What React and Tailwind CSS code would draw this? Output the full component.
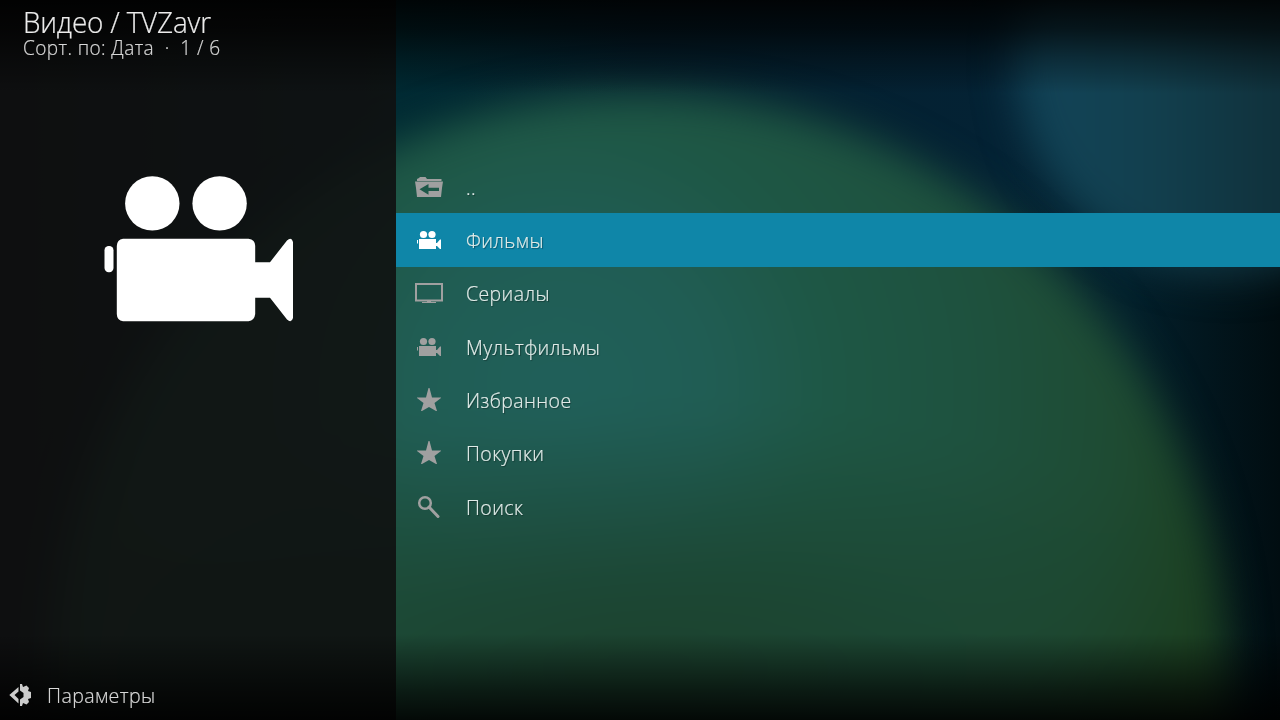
import React from "react";

function Backdrop() {
  return (
    <svg viewBox="0 0 1280 720" className="absolute inset-0 h-full w-full" preserveAspectRatio="none" aria-hidden="true">
      <defs>
        <linearGradient id="base" x1="0" y1="0" x2="1" y2="0">
          <stop offset="0" stopColor="#04060c" />
          <stop offset="0.31" stopColor="#002a33" />
          <stop offset="0.5" stopColor="#04202f" />
          <stop offset="0.78" stopColor="#042234" />
          <stop offset="0.88" stopColor="#03202c" />
          <stop offset="1" stopColor="#010d11" />
        </linearGradient>
        <radialGradient id="green" gradientUnits="userSpaceOnUse" cx="560" cy="390" r="680">
          <stop offset="0" stopColor="#20605a" />
          <stop offset="0.22" stopColor="#205d54" />
          <stop offset="0.4" stopColor="#1e5745" />
          <stop offset="0.6" stopColor="#1e523f" />
          <stop offset="0.82" stopColor="#1e4b33" />
          <stop offset="1" stopColor="#1c4020" />
        </radialGradient>
        <radialGradient id="low" gradientUnits="userSpaceOnUse" cx="0" cy="0" r="1" gradientTransform="translate(640 660) scale(620 250)">
          <stop offset="0" stopColor="#1b402c" stopOpacity="0.9" />
          <stop offset="0.35" stopColor="#1b402c" stopOpacity="0.7" />
          <stop offset="1" stopColor="#1b402c" stopOpacity="0" />
        </radialGradient>
        <linearGradient id="blue" x1="0" y1="0" x2="1" y2="0">
          <stop offset="0" stopColor="#124459" />
          <stop offset="0.3" stopColor="#12404f" />
          <stop offset="0.65" stopColor="#10303a" />
          <stop offset="1" stopColor="#10303a" />
        </linearGradient>
        <linearGradient id="shade" x1="0" y1="0" x2="0" y2="1">
          <stop offset="0" stopColor="#000" stopOpacity="0.88" />
          <stop offset="0.04" stopColor="#000" stopOpacity="0.68" />
          <stop offset="0.08" stopColor="#000" stopOpacity="0.35" />
          <stop offset="0.13" stopColor="#000" stopOpacity="0" />
          <stop offset="0.88" stopColor="#000" stopOpacity="0" />
          <stop offset="0.96" stopColor="#000" stopOpacity="0.62" />
          <stop offset="1" stopColor="#000" stopOpacity="0.88" />
        </linearGradient>
        <filter id="soft" x="-20%" y="-20%" width="140%" height="140%" colorInterpolationFilters="sRGB">
          <feGaussianBlur stdDeviation="21" />
        </filter>
      </defs>
      <rect width="1280" height="720" fill="url(#base)" />
      <circle cx="1230" cy="60" r="215" fill="url(#blue)" filter="url(#soft)" />
      <g filter="url(#soft)">
        <circle cx="640" cy="680" r="588" fill="url(#green)" />
        <circle cx="640" cy="680" r="588" fill="url(#low)" />
      </g>
      <rect width="396" height="720" fill="#101111" fillOpacity="0.9" />
      <rect width="1280" height="720" fill="url(#shade)" />
    </svg>
  );
}

function BigCamera() {
  return (
    <svg viewBox="0 0 190 146" className="h-[146px] w-[190px]" fill="#fff" aria-hidden="true">
      <circle cx="48.3" cy="27.4" r="27.2" />
      <circle cx="115.6" cy="27.4" r="27.2" />
      <rect x="0.5" y="70" width="9" height="26.3" rx="4.2" />
      <path d="M19 62.7H144.500Q151.200 63.500 151.200 70V86.200H166L183 64.500Q187.500 60.500 189 66V142Q187.500 147.500 183 143.500L166 121.700H151.200V138Q150.500 144.500 144.500 145.200H19Q13 144.500 12.800 138V70Q13 63.500 19 62.700Z" />
    </svg>
  );
}

function Camera() {
  return (
    <svg viewBox="0 0 28 28" className="h-7 w-7" fill="currentColor" aria-hidden="true">
      <circle cx="8.500" cy="7.500" r="3.600" />
      <circle cx="17" cy="7.500" r="3.600" />
      <path d="M4 12H21V16H22L25 12.500H26V22H25L22 19H21V22H4ZM2 13H3V16.500H2Z" />
    </svg>
  );
}

function FolderBack() {
  return (
    <svg viewBox="0 0 28 28" className="h-7 w-7" fill="currentColor" aria-hidden="true">
      <path d="M2 5L4 4L5 3H10.500L12 5H26.500V7H2Z" />
      <path fillRule="evenodd" d="M0 7.500H28L27 14L26 23H2L1 14ZM4.500 15.300L13.500 10V13.700H24V17H13.500V20.800Z" />
    </svg>
  );
}

function Monitor() {
  return (
    <svg viewBox="0 0 28 28" className="h-7 w-7" aria-hidden="true">
      <path d="M1 4H27V20.500H1Z" fill="none" stroke="currentColor" strokeWidth="2" />
      <path d="M12 21H16V22H21V23H7V22H12Z" fill="currentColor" />
    </svg>
  );
}

function Star() {
  return (
    <svg viewBox="0 0 28 28" className="h-7 w-7" fill="currentColor" aria-hidden="true">
      <path d="M13.500 1H14.500L17 10.500H26V11L19.500 16L22 24H21L14 20L7 24H6L8.500 16L2 11V10.500H11Z" />
    </svg>
  );
}

function Search() {
  return (
    <svg viewBox="0 0 28 28" className="h-7 w-7" fill="none" stroke="currentColor" aria-hidden="true">
      <circle cx="10" cy="9" r="5.800" strokeWidth="2.500" />
      <path d="M14 13L23 22.500" strokeWidth="3" strokeLinecap="round" />
    </svg>
  );
}

function OptionsIcon() {
  return (
    <svg viewBox="0 0 24 24" className="h-6 w-6" aria-hidden="true">
      <path d="M9.500 3V7.500L5.500 11L9.500 15V19.500L0.300 11Z" fill="#ccc" />
      <path d="M11 0H13L14 3L17.500 1.500L20 4L19 7L22 8V14L19 15L20 18L17.500 20.500L14 19L13 22H11V15.500L14.500 13V9L11 6.500Z" fill="#ccc" />
    </svg>
  );
}

const items = [
  { label: "..", Icon: FolderBack },
  { label: "Фильмы", Icon: Camera, active: true },
  { label: "Сериалы", Icon: Monitor },
  { label: "Мультфильмы", Icon: Camera },
  { label: "Избранное", Icon: Star },
  { label: "Покупки", Icon: Star },
  { label: "Поиск", Icon: Search },
];

export default function App() {
  return (
    <div className="relative h-[720px] w-[1280px] overflow-hidden bg-black font-['Open_Sans','Noto_Sans',sans-serif] font-light [-webkit-text-stroke:0.2px]">
      <Backdrop />
      <div className="relative flex h-full">
        <aside className="flex w-[396px] flex-col">
          <header className="h-[176px] pt-[6px] pl-[23px] whitespace-pre text-[#ececec]">
            <h1 className="origin-left scale-x-[0.93] text-[30px] leading-[32px] tracking-[-0.2px]">Видео / TVZavr</h1>
            <p className="origin-left scale-x-[0.977] text-[19.5px] leading-[20px] tracking-[0.4px] text-[#d8d8d8]">Сорт. по: Дата  ·  1 / 6</p>
          </header>
          <div className="flex-1 pl-[104px]">
            <BigCamera />
          </div>
          <footer className="flex h-[50px] items-center gap-[14px] pl-[9px] pt-px text-[20px] tracking-[0.4px] text-[#d8d8d8]">
            <OptionsIcon />
            <span className="origin-left scale-x-[0.98] pt-px">Параметры</span>
          </footer>
        </aside>
        <main className="flex-1 pt-[160px]">
          <ul>
            {items.map(({ label, Icon, active }) => (
              <li
                key={label}
                className={
                  active
                    ? "flex h-[53.33px] items-center gap-[23px] bg-[#0f86a8] pt-[2px] pl-[19px] text-white"
                    : "flex h-[53.33px] items-center gap-[23px] pt-[2px] pl-[19px] text-[#a0a0a0]"
                }
              >
                <Icon />
                <span className="origin-left scale-x-[0.975] text-[20px] tracking-[0.4px] text-[#e0ebe8] [text-shadow:1px_1px_1px_rgba(0,0,0,0.35)]">{label}</span>
              </li>
            ))}
          </ul>
        </main>
      </div>
    </div>
  );
}
